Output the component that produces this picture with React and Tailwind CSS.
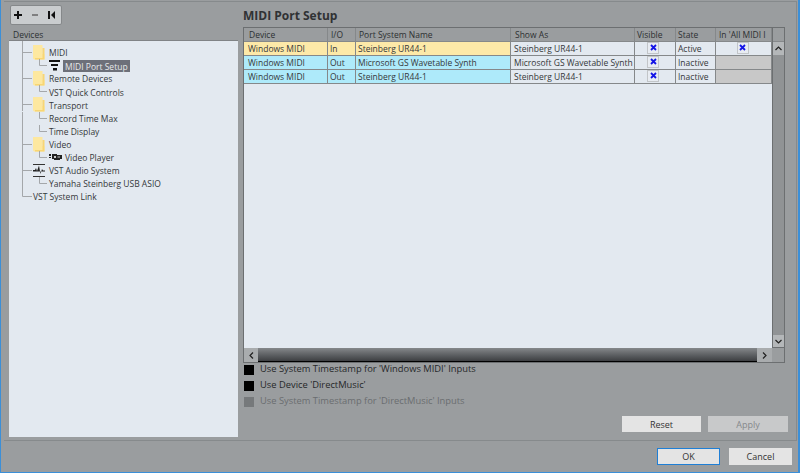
import React from 'react';

const COLS = 'grid grid-cols-[84px_28px_155px_124px_41px_40px_56px]';
const TEXT_PAD = 'pl-[2px] pt-[2px]';
const HEAD_PAD = 'pl-[3px] pt-[2px]';

const Folder = () => (
  <svg width="12" height="15" viewBox="0 0 12 15" className="shrink-0">
    <path d="M0 0H9.5V9H11.5V14.5H1L0 13.5Z" fill="#fde8a0" />
    <path d="M9.5 3H11.5V14.5H2V13H9.5Z" fill="#f8d674" />
  </svg>
);

const PortIcon = () => (
  <svg width="12" height="11" viewBox="0 0 12 11" className="shrink-0">
    <path d="M0 0H11V2H0ZM2 4H9V6H2ZM4 8H8V10.5H4Z" fill="#111" />
  </svg>
);

const VideoIcon = () => (
  <svg width="13" height="8" viewBox="0 0 13 8" className="shrink-0">
    <path d="M0 1H2V3H0ZM3 1H8V2H13V6H11V7H5V6H3ZM0 4H2V5H0Z" fill="#222" />
    <path d="M5 3H7V5H5ZM8.5 3.5H11V4.5H8.5Z" fill="#ccc" />
  </svg>
);

const AudioIcon = () => (
  <svg width="12" height="13" viewBox="0 0 12 13" className="shrink-0">
    <path d="M0 .5H12M0 12.5H12" stroke="#333" strokeWidth="1" />
    <path d="M0 6H2L3 4L4 7L6 1.5L7.5 10L9 5L10 6.5H12V7.5H0Z" fill="#222" />
  </svg>
);

// dotted connector lines of the tree, x runs from the panel's left edge
const Lines = ({ level, last }) => (
  <svg width={level === 2 ? 38 : 24} height="13" className="shrink-0" fill="none" stroke="#a4a7aa">
    <path d={last ? 'M13.5 0V6.5' : 'M13.5 0V13'} />
    {level === 1 && <path d="M13.5 6.5H23" />}
    {level === 2 && <path d="M30.5 0V6.5H38" />}
  </svg>
);

const TreeRow = ({ level = 1, last, icon, selected, children }) => (
  <div className="flex h-[13.1px] items-center">
    <Lines level={level} last={last} />
    {level === 2 && <span className="w-[2px] shrink-0" />}
    {icon && <span className="flex w-[16px] shrink-0 items-center">{icon}</span>}
    {selected ? (
      <span className="ml-[-2px] h-[12px] bg-[#6d7079] px-[2px] leading-[14px] text-[#e6e8ea]">{children}</span>
    ) : (
      <span className="pt-[2px]">{children}</span>
    )}
  </div>
);

const Cell = ({ pad = TEXT_PAD, className = '', children }) => (
  <div className={`flex items-center overflow-hidden whitespace-nowrap border-r border-b border-[#85888a] ${pad} ${className}`}>
    {children}
  </div>
);

const Check = () => (
  <span className="mb-[2px] flex h-[10px] w-[10px] items-center justify-center bg-[#e8ecf2] outline outline-1 outline-[#c2c5c8]">
    <svg width="7" height="7" viewBox="0 0 7 7">
      <path d="M1 1L6 6M6 1L1 6" stroke="#1414e6" strokeWidth="1.8" />
    </svg>
  </span>
);

const Row = ({ bg, io, name, show, state, all }) => (
  <div className={`${COLS} h-[14px]`}>
    <Cell pad="pl-[4px] pt-[2px]" className={bg}>Windows MIDI</Cell>
    <Cell className={bg}>{io}</Cell>
    <Cell className={bg}>{name}</Cell>
    <Cell pad="pl-[3px] pt-[2px]" className="bg-[#e3e9f0]">{show}</Cell>
    <Cell pad="pl-[13px]" className="bg-[#e3e9f0]"><Check /></Cell>
    <Cell className="bg-[#e3e9f0]">{state}</Cell>
    {all ? (
      <Cell pad="pr-[2px]" className="justify-center bg-[#e3e9f0]"><Check /></Cell>
    ) : (
      <Cell className="bg-[#c8c8c8]" />
    )}
  </div>
);

const Option = ({ off, children }) => (
  <div className={`flex h-[16px] items-center gap-[6px] text-[9.35px] ${off ? 'text-[#6a6d70]' : 'text-[#26282a]'}`}>
    <span className={`mt-[2px] h-[10px] w-[10px] ${off ? 'bg-[#76797b]' : 'bg-black'}`} />
    {children}
  </div>
);

const Button = ({ className = '', children }) => (
  <button className={`flex items-center justify-center text-[9px] text-[#333] ${className}`}>{children}</button>
);

export default function App() {
  return (
    <div className="flex h-[473px] w-[800px] flex-col border-b border-l border-r-2 border-[#3b8fd8] bg-[#9a9d9f] font-['Open_Sans',sans-serif] text-[8.5px] leading-none text-[#35383a]">
      <div className="ml-[3px] mt-[1px] flex h-[440px] w-[793px] border-t border-b border-r border-[#868a8c] pl-[5px] pr-[8px]">
        <div className="flex w-[229px] shrink-0 flex-col">
          <div className="mt-[3px] ml-[1px] flex h-[20px] w-[52px] items-center gap-[9px] rounded-[2px] border border-[#85888a] bg-[#c9ccce] pl-[3px]">
            <svg width="8" height="8" viewBox="0 0 8 8"><path d="M0 4H8M4 0V8" stroke="#111" strokeWidth="2" /></svg>
            <svg width="8" height="8" viewBox="0 0 8 8"><path d="M1 4H7" stroke="#666" strokeWidth="1.5" /></svg>
            <svg width="8" height="8" viewBox="0 0 8 8"><path d="M0 0H2V8H0ZM7 0V8L3 4Z" fill="#111" /></svg>
          </div>
          <div className="mt-[4px] flex h-[12px] items-center border-b border-[#808386] pl-[4px] pt-[1px] text-[#2d3032]">Devices</div>
          <div className="h-[396px] bg-[#e3e9f0]">
            <div className="ml-[13px] h-[5px] border-l border-[#a4a7aa]" />
            <TreeRow icon={<Folder />}>MIDI</TreeRow>
            <TreeRow level={2} icon={<PortIcon />} selected>MIDI Port Setup</TreeRow>
            <TreeRow icon={<Folder />}>Remote Devices</TreeRow>
            <TreeRow level={2}>VST Quick Controls</TreeRow>
            <TreeRow icon={<Folder />}>Transport</TreeRow>
            <TreeRow level={2}>Record Time Max</TreeRow>
            <TreeRow level={2}>Time Display</TreeRow>
            <TreeRow icon={<Folder />}>Video</TreeRow>
            <TreeRow level={2} icon={<VideoIcon />}>Video Player</TreeRow>
            <TreeRow icon={<AudioIcon />}>VST Audio System</TreeRow>
            <TreeRow level={2}>Yamaha Steinberg USB ASIO</TreeRow>
            <TreeRow last>VST System Link</TreeRow>
          </div>
        </div>

        <div className="ml-[5px] flex min-w-0 flex-1 flex-col">
          <h1 className="mt-[7px] h-[18px] text-[12px] font-bold leading-[14px] text-[#303234]">MIDI Port Setup</h1>
          <div className="h-[336px] w-[542px] border border-[#6c6f71]">
            <div className="flex">
              <div className="w-[528px] shrink-0">
                <div className={`${COLS} h-[14px] text-[#2d3032]`}>
                  <Cell pad="pl-[5px] pt-[2px]">Device</Cell>
                  <Cell pad={HEAD_PAD}>I/O</Cell>
                  <Cell pad={HEAD_PAD}>Port System Name</Cell>
                  <Cell pad="pl-[4px] pt-[2px]">Show As</Cell>
                  <Cell>Visible</Cell>
                  <Cell>State</Cell>
                  <Cell pad={HEAD_PAD}>In 'All MIDI I</Cell>
                </div>
                <div className="h-[306px] bg-[#e3e9f0]">
                  <Row bg="bg-[#fde9a8]" io="In" name="Steinberg UR44-1" show="Steinberg UR44-1" state="Active" all />
                  <Row bg="bg-[#aeeafa]" io="Out" name="Microsoft GS Wavetable Synth" show="Microsoft GS Wavetable Synth" state="Inactive" />
                  <Row bg="bg-[#aeeafa]" io="Out" name="Steinberg UR44-1" show="Steinberg UR44-1" state="Inactive" />
                </div>
              </div>
              <div className="flex h-[320px] w-[12px] flex-col border-b border-l border-[#6c6f71]">
                <div className="h-[14px] border-b border-[#85888a]" />
                <div className="flex h-[13px] items-center justify-center bg-[#b4b7b9]">
                  <svg width="7" height="5" viewBox="0 0 7 5"><path d="M.5 4L3.5 1L6.5 4" fill="none" stroke="#222" strokeWidth="1.2" /></svg>
                </div>
                <div className="flex-1 bg-[#909395]" />
                <div className="flex h-[12px] items-center justify-center bg-[#b4b7b9]">
                  <svg width="7" height="5" viewBox="0 0 7 5"><path d="M.5 1L3.5 4L6.5 1" fill="none" stroke="#222" strokeWidth="1.2" /></svg>
                </div>
              </div>
            </div>
            <div className="flex h-[14px] w-[528px]">
              <div className="flex w-[14px] items-center justify-center bg-[#a9acae]">
                <svg width="5" height="7" viewBox="0 0 5 7"><path d="M4 .5L1 3.5L4 6.5" fill="none" stroke="#222" strokeWidth="1.2" /></svg>
              </div>
              <div className="flex-1 border-b border-black bg-gradient-to-b from-[#85888b] to-[#3d3f42]" />
              <div className="flex w-[15px] items-center justify-center bg-[#a9acae]">
                <svg width="5" height="7" viewBox="0 0 5 7"><path d="M1 .5L4 3.5L1 6.5" fill="none" stroke="#222" strokeWidth="1.2" /></svg>
              </div>
            </div>
          </div>
          <div className="mt-[-2px] pl-[1px]">
            <Option>Use System Timestamp for 'Windows MIDI' Inputs</Option>
            <Option>Use Device 'DirectMusic'</Option>
            <Option off>Use System Timestamp for 'DirectMusic' Inputs</Option>
          </div>
          <div className="mt-[7px] flex justify-end gap-[7px]">
            <Button className="h-[16px] w-[79px] bg-[#e4e4e4]">Reset</Button>
            <Button className="h-[16px] w-[80px] bg-[#c8c9ca] text-[#85888a]">Apply</Button>
          </div>
        </div>
      </div>
      <div className="flex flex-1 items-start justify-end gap-[9px] pt-[7px] pr-[6px]">
        <Button className="h-[17px] w-[63px] border border-[#1f7fd6] bg-[#e4e4e4]">OK</Button>
        <Button className="h-[17px] w-[63px] bg-[#e4e4e4]">Cancel</Button>
      </div>
    </div>
  );
}
